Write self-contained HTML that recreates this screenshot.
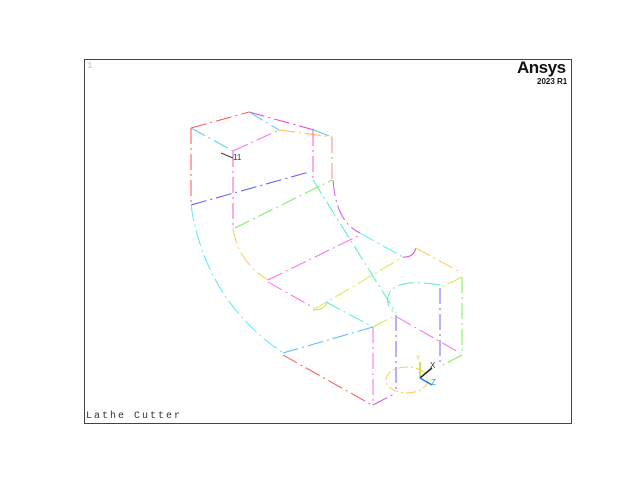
<!DOCTYPE html>
<html><head><style>
body{margin:0;background:#fff;width:640px;height:480px;overflow:hidden;position:relative;font-family:"Liberation Sans",sans-serif}
.f{position:absolute;left:84px;top:59px;width:486px;height:363px;border:1px solid #444}
.t{position:absolute;font-family:"Liberation Mono",monospace;font-size:10px;color:#333;letter-spacing:2px}
</style></head><body>
<div class="f"></div>
<div class="t" style="left:86px;top:411px">Lathe Cutter</div>
<div class="t" style="left:87px;top:61px;color:#bbb;font-size:9px">1</div>
<div style="position:absolute;left:517px;top:58px;font-weight:bold;font-size:17px;color:#111;letter-spacing:-0.5px">Ansys</div>
<div style="position:absolute;left:537px;top:77px;font-weight:bold;font-size:8px;color:#111">2023 R1</div>
<svg width="640" height="480" style="position:absolute;left:0;top:0" fill="none" stroke-width="1" stroke-dasharray="16 4 2 4">
<path d="M191 128L249 112" stroke="#f55"/>
<path d="M249 112L314 130" stroke="#d4d"/>
<path d="M191 128L233 151" stroke="#5cf"/>
<path d="M233 151L279 130" stroke="#f6e"/>
<path d="M249 112L279 130" stroke="#5ce"/>
<path d="M279 130L332 137" stroke="#fb4"/>
<path d="M314 130L332 137" stroke="#5ce"/>
<path d="M191 128L191 205" stroke="#f55"/>
<path d="M233 151L233 228" stroke="#f5c"/>
<path d="M313 130L313 180" stroke="#f5c"/>
<path d="M332 137L332 180" stroke="#f88"/>
<path d="M191 205L309 172" stroke="#55f"/>
<path d="M235 228L332 180" stroke="#7e5"/>
<path d="M191 205Q205 300 283 353" stroke="#5ee"/>
<path d="M233 228Q238 262 268 280" stroke="#fc5"/>
<path d="M268 280L360 235" stroke="#f6e"/>
<path d="M333 180Q336 222 360 233" stroke="#c5f"/>
<path d="M313 180L396 313" stroke="#5ec"/>
<path d="M360 233L403 257" stroke="#5ee"/>
<path d="M268 282L314 308" stroke="#f6e"/>
<path d="M313 310L403 257" stroke="#ce4"/>
<path d="M403 257Q413 258 416 248" stroke="#d4d" stroke-dasharray="none"/>
<path d="M313 310Q325 310 327 302" stroke="#ce4" stroke-dasharray="none"/>
<path d="M416 248L462 273" stroke="#fc5"/>
<path d="M462 277L462 353" stroke="#7e5"/>
<path d="M462 277L442 287" stroke="#ce4"/>
<path d="M440 285Q400 278 390 292Q383 304 396 314" stroke="#5ec"/>
<path d="M440 288L440 365" stroke="#66f"/>
<path d="M396 315L396 393" stroke="#66f"/>
<path d="M373 327L373 405" stroke="#f6e"/>
<path d="M397 317L460 353" stroke="#f6e"/>
<path d="M462 355L441 366" stroke="#7e5"/>
<path d="M373 327L283 353" stroke="#5bf"/>
<path d="M373 327L396 315" stroke="#ce4"/>
<path d="M326 302L373 327" stroke="#5ec"/>
<path d="M283 355L372 405" stroke="#f55"/>
<path d="M373 405L396 393" stroke="#c5f"/>
<ellipse cx="407" cy="380" rx="21" ry="13" stroke="#fc5" stroke-dasharray="10 3 2 3"/>
<g stroke-dasharray="none" stroke-width="1.5">
<path d="M420 378L420 362" stroke="#bd2"/>
<path d="M420 378L432 368" stroke="#222"/>
<path d="M420 378L432 385" stroke="#18c"/>
<path d="M221 153L233 158" stroke="#444" stroke-width="1"/>
</g>
</svg>
<div style="position:absolute;left:233px;top:153px;font-size:8px;color:#333">11</div>
<div style="position:absolute;left:430px;top:361px;font-size:8px;color:#333">X</div>
<div style="position:absolute;left:431px;top:378px;font-size:8px;color:#29d">Z</div>
<div style="position:absolute;left:416px;top:356px;font-size:6px;color:#bd2">Y</div>
</body></html>
